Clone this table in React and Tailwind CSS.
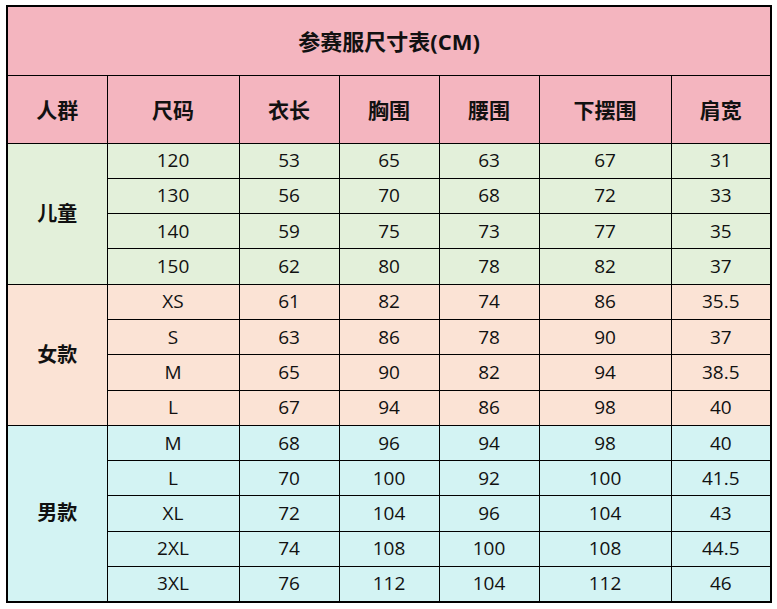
const groups = [
  {
    name: '儿童',
    bg: 'bg-[#e3f0da]',
    rows: [
      ['120', '53', '65', '63', '67', '31'],
      ['130', '56', '70', '68', '72', '33'],
      ['140', '59', '75', '73', '77', '35'],
      ['150', '62', '80', '78', '82', '37'],
    ],
  },
  {
    name: '女款',
    bg: 'bg-[#fbe3d5]',
    rows: [
      ['XS', '61', '82', '74', '86', '35.5'],
      ['S', '63', '86', '78', '90', '37'],
      ['M', '65', '90', '82', '94', '38.5'],
      ['L', '67', '94', '86', '98', '40'],
    ],
  },
  {
    name: '男款',
    bg: 'bg-[#d3f3f3]',
    rows: [
      ['M', '68', '96', '94', '98', '40'],
      ['L', '70', '100', '92', '100', '41.5'],
      ['XL', '72', '104', '96', '104', '43'],
      ['2XL', '74', '108', '100', '108', '44.5'],
      ['3XL', '76', '112', '104', '112', '46'],
    ],
  },
];

const headers = ['人群', '尺码', '衣长', '胸围', '腰围', '下摆围', '肩宽'];
const widths = ['w-[100px]', 'w-[132px]', 'w-[100px]', 'w-[100px]', 'w-[100px]', 'w-[132px]', 'w-[100px]'];

export default function App() {
  return (
    <div className="w-[777px] h-[609px] bg-white pt-[5px] pl-[6px] font-['Open_Sans','Noto_Sans_CJK_SC',sans-serif] text-[#111]">
      <table className="table-fixed border-collapse border-2 border-black w-[765px]">
        <colgroup>
          {widths.map((w, i) => (
            <col key={i} className={w} />
          ))}
        </colgroup>
        <tbody>
          {/* title */}
          <tr className="h-[69px] bg-[#f4b5bf]">
            <td colSpan={7} className="border border-black text-center text-[22px] font-bold pt-[2px]">
              参赛服尺寸表(CM)
            </td>
          </tr>
          <tr className="h-[68px] bg-[#f4b5bf]">
            {headers.map((h) => (
              <td key={h} className="border border-black text-center text-[21px] font-bold pt-[3px]">
                {h}
              </td>
            ))}
          </tr>
          {groups.map((g) =>
            g.rows.map((r, i) => (
              <tr key={g.name + i} className={`h-[35.3px] ${g.bg}`}>
                {i === 0 && (
                  <td rowSpan={g.rows.length} className="border border-black text-center text-[20px] font-bold">
                    {g.name}
                  </td>
                )}
                {r.map((v, j) => (
                  <td key={j} className="border border-black text-center text-[19px] leading-none">
                    {v}
                  </td>
                ))}
              </tr>
            ))
          )}
        </tbody>
      </table>
    </div>
  );
}
